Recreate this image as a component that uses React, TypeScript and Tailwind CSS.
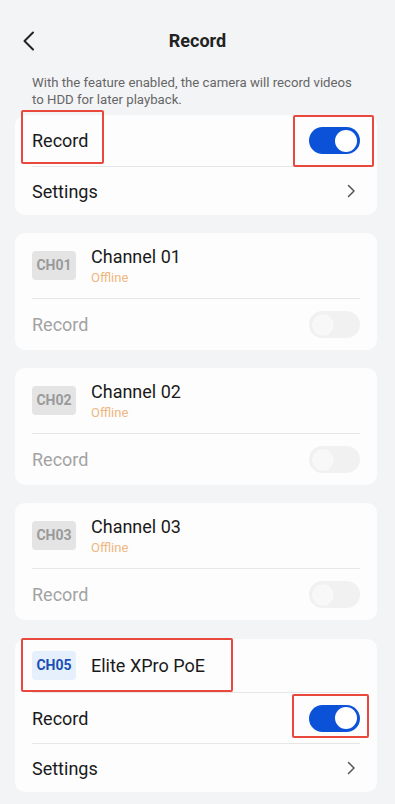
import React from "react";

const font = { fontFamily: "Roboto, 'Noto Sans', Arial, sans-serif" };

function Toggle({ on }: { on: boolean }) {
  if (on) {
    return (
      <div className="w-[51px] h-[27px] rounded-full bg-[#0b52d8] flex items-center justify-end pr-[3px]">
        <div className="w-[22px] h-[22px] rounded-full bg-white" />
      </div>
    );
  }
  return (
    <div className="w-[51px] h-[27px] rounded-full bg-[#f1f1f1] flex items-center justify-start pl-[3px]">
      <div className="w-[22px] h-[22px] rounded-full bg-[#f8f8f8] shadow-[0_0_1px_rgba(0,0,0,0.06)]" />
    </div>
  );
}

function ChevronRight() {
  return (
    <svg width="10" height="14" viewBox="0 0 10 14" fill="none">
      <path d="M2.5 1.5 L8 7 L2.5 12.5" stroke="#555" strokeWidth="1.5" strokeLinecap="round" strokeLinejoin="round" />
    </svg>
  );
}

function RedBox({ className }: { className: string }) {
  return <div className={`absolute border-2 border-[#e8483e] rounded-[2px] pointer-events-none ${className}`} />;
}

function Divider() {
  return <div className="h-px bg-[#e6e6e6]" />;
}

function OfflineCard({ ch, name }: { ch: string; name: string }) {
  return (
    <div className="ml-[15px] w-[362px] bg-[#fdfdfd] rounded-[10px] px-[17px]">
      <div className="h-[65px] flex items-center">
        <div className="w-[44px] h-[29px] rounded-[4px] bg-[#e4e4e4] flex items-center justify-center text-[14px] font-bold text-[#9a9a9a]">
          {ch}
        </div>
        <div className="ml-[15px] flex flex-col">
          <div className="text-[18px] leading-[22px] text-[#1a1a1a]">{name}</div>
          <div className="text-[13px] leading-[17px] text-[#efb77f] mt-[1px]">Offline</div>
        </div>
      </div>
      <Divider />
      <div className="h-[51px] flex items-center justify-between">
        <div className="text-[18px] text-[#a3a3a3]">Record</div>
        <Toggle on={false} />
      </div>
    </div>
  );
}

export default function App() {
  return (
    <div className="w-[395px] min-h-[804px] bg-[#f3f4f6] pb-[12px]" style={font}>
      <div className="h-[74px] relative flex justify-center pt-[30px]">
        <div className="absolute left-[21px] top-[31px]">
          <svg width="16" height="20" viewBox="0 0 16 20" fill="none">
            <path d="M12 1.5 L3.5 10 L12 18.5" stroke="#222" strokeWidth="2" strokeLinecap="round" strokeLinejoin="round" />
          </svg>
        </div>
        <div className="text-[18px] leading-[22px] font-bold text-[#222]">Record</div>
      </div>
      <div className="pl-[32px] pr-[36px] text-[13.2px] leading-[17px] text-[#666]">
        With the feature enabled, the camera will record videos to HDD for later playback.
      </div>

      <div className="relative mt-[7px] ml-[15px] w-[362px] bg-[#fdfdfd] rounded-[10px] px-[17px]">
        <div className="h-[51px] flex items-center justify-between">
          <div className="text-[18px] text-[#1a1a1a]">Record</div>
          <Toggle on />
        </div>
        <Divider />
        <div className="h-[48px] flex items-center justify-between">
          <div className="text-[18px] text-[#1a1a1a]">Settings</div>
          <div className="pr-[4px]"><ChevronRight /></div>
        </div>
        <RedBox className="left-[6px] top-[-5px] w-[83px] h-[54px]" />
        <RedBox className="left-[278px] top-0 w-[81px] h-[52px]" />
      </div>

      <div className="flex flex-col gap-[18px] mt-[18px]">
        <OfflineCard ch="CH01" name="Channel 01" />
        <OfflineCard ch="CH02" name="Channel 02" />
        <OfflineCard ch="CH03" name="Channel 03" />

        <div className="relative mt-[1px] ml-[15px] w-[362px] bg-[#fdfdfd] rounded-[10px] px-[17px]">
          <div className="h-[53px] flex items-center">
            <div className="w-[44px] h-[29px] rounded-[4px] bg-[#e6f0fc] flex items-center justify-center text-[14px] font-bold text-[#1a4fb5]">
              CH05
            </div>
            <div className="ml-[15px] text-[18px] text-[#1a1a1a]">Elite XPro PoE</div>
          </div>
          <Divider />
          <div className="h-[50px] flex items-center justify-between">
            <div className="text-[18px] text-[#1a1a1a]">Record</div>
            <Toggle on />
          </div>
          <Divider />
          <div className="h-[48px] flex items-center justify-between">
            <div className="text-[18px] text-[#1a1a1a]">Settings</div>
            <div className="pr-[4px]"><ChevronRight /></div>
          </div>
          <RedBox className="left-[6px] top-[-1px] w-[212px] h-[54px]" />
          <RedBox className="left-[277px] top-[55px] w-[77px] h-[44px]" />
        </div>
      </div>
    </div>
  );
}
